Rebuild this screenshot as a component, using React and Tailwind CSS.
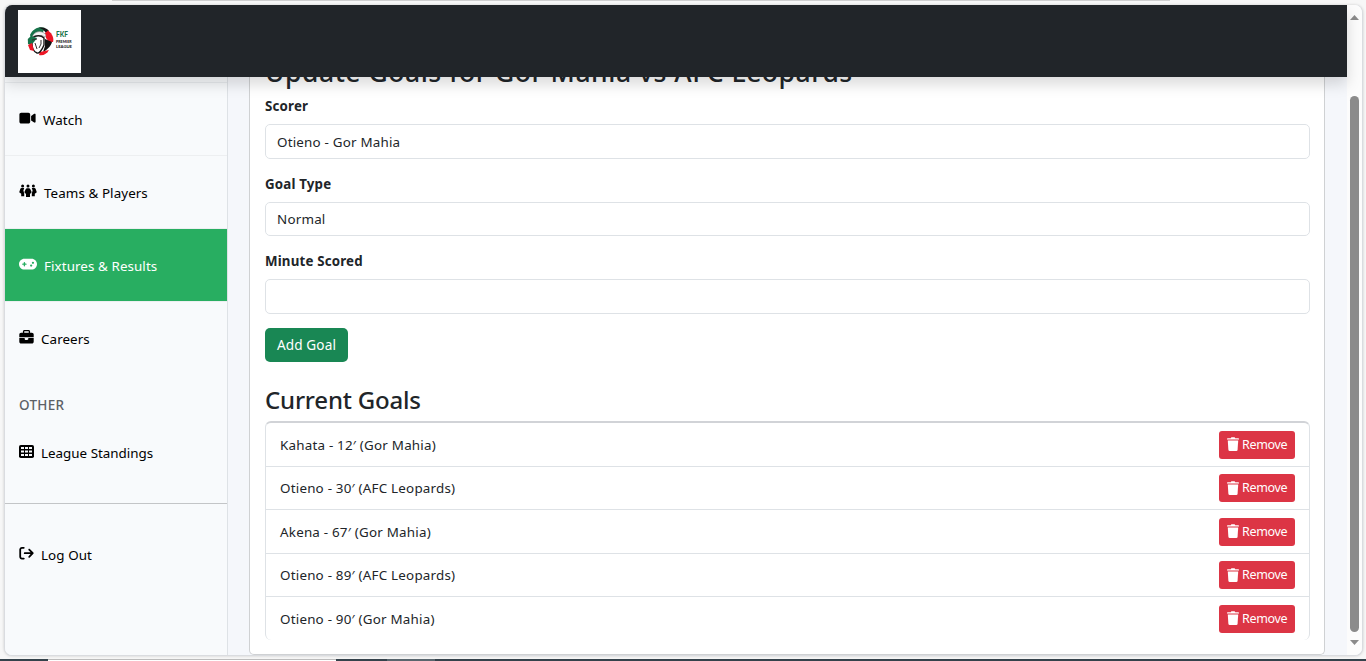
import React from "react";
import { FaVideo, FaGamepad, FaBriefcase, FaArrowRightFromBracket } from "react-icons/fa6";

const goals = [
  { text: "Kahata - 12′ (Gor Mahia)", cls: "h-[44px] border-b" },
  { text: "Otieno - 30′ (AFC Leopards)", cls: "h-[43px] border-b" },
  { text: "Akena - 67′ (Gor Mahia)", cls: "h-[44px] border-b" },
  { text: "Otieno - 89′ (AFC Leopards)", cls: "h-[43px] border-b" },
  { text: "Otieno - 90′ (Gor Mahia)", cls: "h-[43px]" },
];

function Logo() {
  return (
    <div className="flex h-[63px] w-[63px] items-center bg-white pl-[9px]">
      <svg width="27" height="31" viewBox="0 0 27 31" className="shrink-0">
        <path d="M3 9C6 2 13 0 18 2L16 6 9 7 4 12Z" fill="#17734a" />
        <path d="M12 1.8C16 .8 20 2 22 5L19 7 16 3.5Z" fill="#171717" />
        <path d="M18 7 21 4.500C26 8 27 13 26 16L22 16 19 12Z" fill="#ed1626" />
        <path d="M18 13 25 16C24 20 20 24 16 26L18 20Z" fill="#111" />
        <path d="M13 26 22 24C20 28 16 30 12 29Z" fill="#ed1626" />
        <path d="M6 9C10 4 16 5 19 9L18 11C13 8 9 10 5 12Z" fill="#f4f4f4" stroke="#777" strokeWidth=".6" />
        <path d="M5 12C9 9 14 9 17 12L17 19C15 24 12 28 10 27 7 26 5 22 5 18Z" fill="#fff" stroke="#161616" strokeWidth="1.4" />
        <path d="M.8 13 4 10 10 12 7 16 4 19 1 18Z" fill="#17734a" />
        <path d="M1 19 5 17 7 25 3 24Z" fill="#ed1626" />
        <path d="M5 14 10 13M8 17 10 23M14 14 14 18 12 22" fill="none" stroke="#333" strokeWidth="1" />
      </svg>
      <div className="flex h-[20px] flex-col whitespace-nowrap pl-[2px] font-['Lato',sans-serif] font-black text-[#222]">
        <span className="text-[6.5px] leading-[8px] text-[#17734a]">FKF</span>
        <span className="text-[3.6px] leading-[5px]">PREMIER</span>
        <span className="text-[4.2px] leading-[5px]">LEAGUE</span>
      </div>
    </div>
  );
}

function PeopleIcon() {
  return (
    <svg width="18" height="14" viewBox="0 0 18 14" className="mb-[2px]" fill="currentColor">
      <circle cx="3.600" cy="1.900" r="1.500" />
      <circle cx="9" cy="1.900" r="1.500" />
      <circle cx="14.400" cy="1.900" r="1.500" />
      <path d="M2.500 4H5.200L4.400 6.600 5.200 9.500V12.300H2.200V9.800L.2 8.200 1.300 5Q1.600 4 2.500 4Z" />
      <path d="M15.500 4H12.800L13.600 6.600 12.800 9.500V12.300H15.800V9.800L17.800 8.200 16.700 5Q16.400 4 15.500 4Z" />
      <path d="M8 4.200h2q.8 0 1.200.8l1.500 3.200-1.700 1.900V13H7V10.100L5.300 8.200 6.800 5Q7.200 4.200 8 4.200Z" />
    </svg>
  );
}

function TableIcon() {
  return (
    <svg width="15" height="13" viewBox="0 0 15 13" className="mb-[2px] shrink-0">
      <rect width="15" height="13" rx="1.800" fill="currentColor" />
      <path d="M2 2h3v2H2zM6 2h3v2H6zM10 2h3v2h-3zM2 5.500h3v2H2zM6 5.500h3v2H6zM10 5.500h3v2h-3zM2 9h3v2H2zM6 9h3v2H6zM10 9h3v2h-3z" fill="#f8fafc" />
    </svg>
  );
}

function TrashIcon() {
  return (
    <svg width="12" height="14" viewBox="0 0 12 14" className="mb-px shrink-0" fill="currentColor">
      <path d="M.7 1.200H3.700L4.400.3H7.600L8.300 1.200H11.300Q12 1.200 12 2V2.500H0V2Q0 1.200 .7 1.200Z" />
      <path d="M.8 3.600H11.200L10.600 12.700Q10.500 14 9.300 14H2.700Q1.500 14 1.400 12.700Z" />
    </svg>
  );
}

function NavItem({ icon, label, className }) {
  return (
    <a className={`flex shrink-0 items-center pl-[14px] ${className}`}>
      {icon}
      <span className="pt-[2px]">{label}</span>
    </a>
  );
}

function Sidebar() {
  return (
    <nav className="flex w-[223px] shrink-0 flex-col border-r border-[#dee2e6] bg-[#f8fafc] text-[13.4px] tracking-[0.08px] text-black">
      <div className="h-[6px] shrink-0 border-b border-[#e9ecef]" />
      <NavItem className="h-[73px] gap-[7px] border-b border-[#edeff1]" icon={<FaVideo className="mb-[2px] h-[14.4px] w-[17px]" />} label="Watch" />
      <NavItem className="h-[73px] gap-[7px] border-b border-[#edeff1]" icon={<PeopleIcon />} label="Teams & Players" />
      <NavItem className="h-[73px] gap-[7px] border-b border-[#edeff1] bg-[#28ae61] text-white" icon={<FaGamepad className="mb-px h-[14.4px] w-[18px]" />} label="Fixtures & Results" />
      <NavItem className="h-[73px] gap-[7px]" icon={<FaBriefcase className="mb-[2px] h-[14.4px] w-[15px]" />} label="Careers" />
      <div className="flex h-[60px] shrink-0 items-center pl-[14px] pt-px text-[13.5px] font-medium tracking-[0.3px] text-[#5c6166]">OTHER</div>
      <NavItem className="-mt-px h-[36px] gap-[7px] tracking-[0px]" icon={<TableIcon />} label="League Standings" />
      <div className="h-[34px] shrink-0 border-b border-[#c3c5c7]" />
      <NavItem className="mt-[32px] h-[36px] gap-[7px]" icon={<FaArrowRightFromBracket className="mb-[2px] h-[14.4px] w-[15px]" />} label="Log Out" />
    </nav>
  );
}

function Field({ label, value, className, box }) {
  return (
    <div className={className}>
      <div className="h-[18px] text-[13.3px] font-bold leading-[18px] tracking-[0.18px]">{label}</div>
      <div className={`mt-[9px] flex items-center rounded-[5px] border border-[#dee2e6] bg-white pl-[11px] text-[13.4px] tracking-[0.2px] ${box}`}>{value}</div>
    </div>
  );
}

function GoalsCard() {
  return (
    <main className="ml-[21px] flex h-[578px] w-[1076px] shrink-0 flex-col rounded-b-[5px] border border-t-0 border-[#cfd1d3] bg-white pl-[15px] pr-[14px] text-[#212529]">
      <h2 className="-mt-[21px] h-[40px] shrink-0 whitespace-nowrap text-[26.5px] font-medium leading-[33px] tracking-[0.52px]">Update Goals for Gor Mahia vs AFC Leopards</h2>
      <Field className="h-[78px] shrink-0 pt-px" box="h-[35px] pt-px" label="Scorer" value="Otieno - Gor Mahia" />
      <Field className="h-[77px] shrink-0 pt-px" box="h-[34px]" label="Goal Type" value="Normal" />
      <Field className="h-[77px] shrink-0 pt-px" box="h-[35px]" label="Minute Scored" value="" />
      <button className="h-[34px] w-[83px] shrink-0 rounded-[5px] bg-[#198754] text-[13.6px] tracking-[0.1px] text-white">Add Goal</button>
      <h3 className="mt-[20px] h-[39px] shrink-0 text-[24px] font-medium leading-[36px] tracking-[-0.2px]">Current Goals</h3>
      <ul className="shrink-0 rounded-[6px] border-x border-t-2 border-[#dee2e6] border-t-[#d1d3d7] text-[13.4px] tracking-[0.21px]">
        {goals.map((g) => (
          <li key={g.text} className={`flex items-center justify-between border-[#dee2e6] px-[14px] ${g.cls}`}>
            <span className="pt-px">{g.text}</span>
            <button className="flex h-[28px] w-[76px] items-center gap-[3px] rounded-[3px] bg-[#dc3545] pl-[8px] text-[12.5px] tracking-[-0.35px] text-white">
              <TrashIcon />
              <span className="pt-px">Remove</span>
            </button>
          </li>
        ))}
      </ul>
    </main>
  );
}

function Scrollbar() {
  return (
    <div className="flex w-[15px] shrink-0 flex-col items-center bg-[#fcfcfc]">
      <svg width="9" height="5" className="mt-[10px] shrink-0"><path d="M0 5 4.5 0 9 5Z" fill="#8b8b8b" /></svg>
      <div className="mt-[76px] h-[536px] w-[9px] shrink-0 rounded-full bg-[#8b8b8b]" />
      <svg width="9" height="5" className="mt-[8px] shrink-0"><path d="M0 0H9L4.5 5Z" fill="#8b8b8b" /></svg>
    </div>
  );
}

export default function App() {
  return (
    <div className="flex h-[661px] w-[1366px] flex-col overflow-hidden bg-[#f7f7f7] font-['Noto_Sans','Open_Sans',sans-serif]">
      <div className="flex h-[5px] shrink-0">
        <div className="ml-[112px] h-px w-[1058px] bg-[#cfcfcf]" />
      </div>
      <div className="ml-[4px] flex h-[651px] w-[1359px] shrink-0 overflow-hidden rounded-[8px] border border-t-0 border-[#dadce0] bg-[#f5f7fb] shadow-[0_0_3px_rgba(0,0,0,0.18)]">
        <div className="flex w-[1342px] shrink-0 flex-col">
          <header className="z-10 flex h-[72px] shrink-0 items-center bg-[#212529] pl-[13px] shadow-[0_7px_14px_rgba(0,0,0,0.15)]">
            <Logo />
          </header>
          <div className="flex min-h-0 grow">
            <Sidebar />
            <GoalsCard />
          </div>
        </div>
        <Scrollbar />
      </div>
      <div className="mt-[3px] flex h-[2px] shrink-0">
        <div className="w-[48px] bg-[#34424b]" />
        <div className="w-[288px] border-t border-[#bcbcbc] bg-white" />
        <div className="w-[51px] bg-[#34424b]" />
        <div className="w-[48px] bg-[#59666e]" />
        <div className="grow bg-[#34424b]" />
      </div>
    </div>
  );
}
